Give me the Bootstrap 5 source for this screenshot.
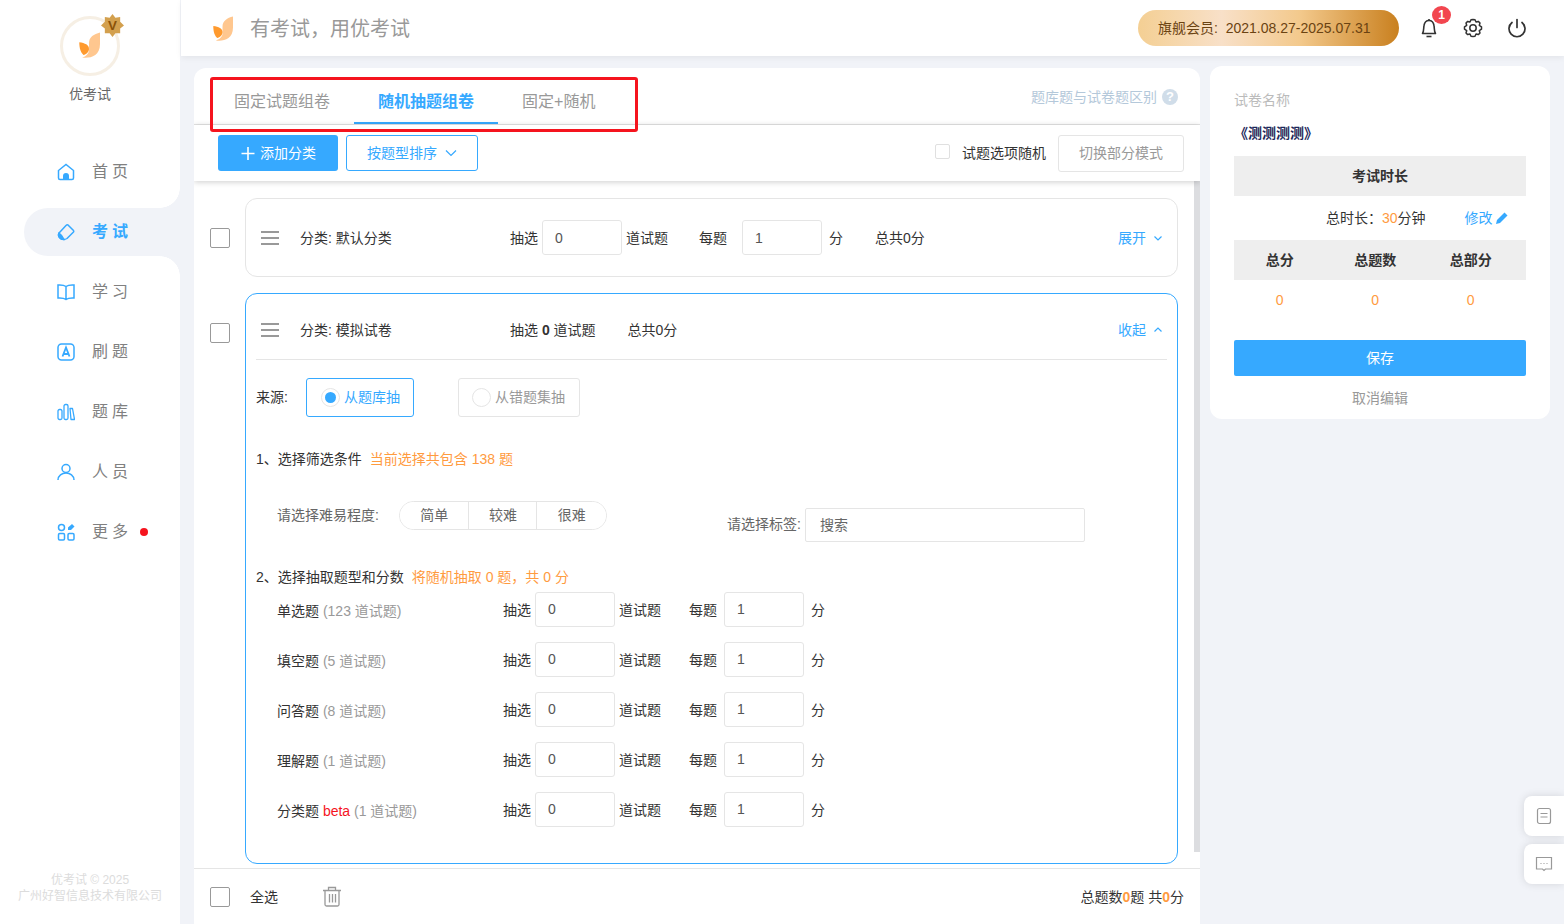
<!DOCTYPE html>
<html lang="zh-CN">
<head>
<meta charset="utf-8">
<title>优考试</title>
<link href="https://cdn.jsdelivr.net/npm/bootstrap@5.3.0/dist/css/bootstrap.min.css" rel="stylesheet">
<style>
html,body{height:100%;overflow:hidden}
body{font-family:"Liberation Sans","Noto Sans CJK SC",sans-serif;font-size:14px;color:#333;background:#f1f3f8;line-height:20px}
.app-shell{height:924px;width:1564px}
.side-bar{width:180px;flex:none;background:#fff;height:924px}
.brand-box{height:142px;padding-top:16px}
.logo-ring{width:60px;height:60px;border-radius:50%;border:3px solid #f6efe4;position:relative;background:#fff}
.logo-ring svg.leaf{width:21px;height:26px;margin:13px 0 0 16px;display:block}
.logo-star{position:absolute;right:-7px;top:-5px;width:23px;height:23px}
.brand-name{color:#666;font-size:14px;margin-top:8px}
.menu-row{height:60px;padding:6px 0 6px 57px;color:#808080;font-size:16px;letter-spacing:4px;position:relative}
.menu-row svg{width:18px;height:18px;margin-right:17px;flex:none}
.menu-row.is-on{height:48px;margin:6px 0 6px 24px;padding:0 0 0 33px;background:#f1f3f8;border-radius:24px 0 0 24px;color:#36a9ff;font-weight:700}
.menu-row.is-on::before,.menu-row.is-on::after{content:"";position:absolute;right:0;width:20px;height:20px}
.menu-row.is-on::before{top:-20px;background:radial-gradient(circle at 0 0,#fff 19.5px,#f1f3f8 20px)}
.menu-row.is-on::after{bottom:-20px;background:radial-gradient(circle at 0 100%,#fff 19.5px,#f1f3f8 20px)}
.red-dot{width:8px;height:8px;border-radius:50%;background:#f5141e;display:inline-block;margin-left:8px}
.copy-note{color:#dcdcdc;font-size:12px;line-height:16px;padding-bottom:20px;margin-top:auto}
.top-bar{height:56px;background:#fff;margin-left:1px;box-shadow:0 2px 6px rgba(0,0,0,.06);padding-left:32px;padding-right:35px;position:relative;z-index:2}
.slogan{font-size:20px;color:#999;margin-left:17px;padding-top:2px}
.vip-pill{width:261px;height:36px;border-radius:18px;background:linear-gradient(90deg,#f4cf93 0%,#f8e0c8 32%,#f3c98c 62%,#c9801f 100%);color:#6b4312;font-size:14px;padding-left:20px;margin-right:-2px}
.top-icon{width:24px;height:24px;margin-left:20px;position:relative;flex:none}
.top-icon svg{width:24px;height:24px;display:block}
.num-dot{position:absolute;left:15px;top:-10px;width:19px;height:18px;border-radius:50%;background:#f2464f;color:#fff;font-size:12px;font-weight:700;line-height:18px;text-align:center}
.work-area{padding:10px 14px 0 14px;gap:10px;height:868px;margin-top:0}
.main-panel{width:1006px;height:856px;background:#fff;border-radius:12px 12px 0 0;margin-top:2px;position:relative;overflow:hidden;border:0}
.tab-line{height:57px;border-bottom:1px solid #e5e5e5;padding-left:16px;padding-right:22px;flex:none}
.tab-item{height:56px;font-size:16px;color:#999;padding:14px 24px 0;display:flex;align-items:center;border-bottom:2px solid transparent;text-decoration:none}
.tab-item:hover{color:#999}
.tab-item.is-on{color:#36a9ff;font-weight:700;border-bottom-color:#36a9ff}
.red-frame{position:absolute;left:16px;top:9px;width:428px;height:55px;border:3px solid #f5141e;border-radius:3px;pointer-events:none;z-index:3}
.hint-link{color:#b4c8da;font-size:14px;margin-top:19px}
.hint-q{width:16px;height:16px;border-radius:50%;background:#d0dde9;color:#fff;font-size:13px;font-weight:700;line-height:16px;text-align:center;margin-left:5px}
.tool-line{height:56px;padding:10px 16px 0 24px;box-shadow:0 1px 6px rgba(0,0,0,.2);position:relative;z-index:1;background:#fff;align-items:flex-start;flex:none}
.btn-fill{width:120px;height:36px;background:#36a9ff;border:0;border-radius:3px;color:#fff;font-size:14px;padding:0;display:flex;align-items:center;justify-content:center}
.btn-line{width:132px;height:36px;background:#fff;border:1px solid #36a9ff;border-radius:3px;color:#36a9ff;font-size:14px;padding:0;margin-left:8px;display:flex;align-items:center;justify-content:center}
.btn-plain{width:126px;height:37px;background:#fff;border:1px solid #e5e5e5;border-radius:3px;color:#999;font-size:14px;padding:0;margin-left:12px}
.form-check-input.tick{width:20px;height:20px;margin:0;border:1px solid #999;border-radius:2px;flex:none;background-color:#fff}
.form-check-input.tick-sm{width:15px;height:15px;margin:9px 0 0;border:1px solid #e0e0e0;border-radius:2px}
.scroll-zone{height:687px;padding:17px 0 0 16px;position:relative;overflow:hidden;flex:none}
.scroll-thumb{position:absolute;right:0;top:0;width:6px;height:671px;background:#dcdde0}
.case-row{gap:15px;align-items:flex-start;margin-bottom:16px}
.case-box{width:933px;border-radius:12px;border:1px solid #e5e5e5;margin:0;flex:none}
.case-box.is-open{border-color:#36a9ff;height:571px;padding:0 10px}
.form-check-input.tick.tick-drop{margin-top:30px}
.case-head{height:77px;padding:0 14px 0 15px;flex:none}
.is-open .case-head{height:66px;padding:6px 4px 0 5px;border-bottom:1px solid #e5e5e5}
.burger{width:18px;height:14px;margin-right:21px;flex:none;display:block}
.w-name{width:210px;flex:none}
.w-pick{width:32px;flex:none}
.w-way{width:73px;flex:none;margin-left:4px}
.w-each{width:43px;flex:none}
.w-unit{width:46px;flex:none;margin-left:7px}
.num-box.form-control{width:80px;height:35px;flex:none;border:1px solid #e5e5e5;border-radius:3px;font-size:14px;color:#555;padding:0 12px;background:#fff;box-shadow:none}
.link-blue{color:#36a9ff;margin-left:auto}
.link-blue svg{width:10px;height:10px;margin-left:7px}
.src-line{margin-top:18px;height:39px;flex:none}
.src-label{width:50px;padding-bottom:2px}
.src-opt{height:39px;border:1px solid #36a9ff;border-radius:3px;width:108px;color:#36a9ff;padding:0 0 1px 14px}
.src-opt.is-off{border-color:#e5e5e5;color:#999;width:122px;margin-left:44px;padding-left:13px}
.dot-radio{width:19px;height:19px;border-radius:50%;border:1px solid #e5e5e5;margin-right:4px;flex:none;position:relative;background:#fff}
.is-sel::after{content:"";position:absolute;left:3px;top:3px;width:11px;height:11px;border-radius:50%;background:#36a9ff}
.step-line{height:20px;font-size:14px;flex:none}
.step-line b{font-weight:400;color:#ff9b3f;margin-left:8px;font-size:14px}
.step-a{margin-top:32px}
.filter-line{margin-top:32px;height:41px;padding-left:21px;align-items:flex-start;flex:none}
.lvl-label{width:122px;height:29px;line-height:29px;color:#666;font-size:14px;flex:none}
.lvl-group{width:208px;height:29px;border:1px solid #e5e5e5;border-radius:15px;overflow:hidden;flex:none}
.lvl-group .btn{flex:1;border:0;border-left:1px solid #e5e5e5;border-radius:0;padding:0;font-size:14px;color:#666;background:#fff;height:27px}
.lvl-group .btn:first-child{border-left:0}
.tag-label{margin-left:120px;margin-top:13px;width:78px;color:#666;font-size:14px;line-height:20px;flex:none}
.tag-box.form-control{width:280px;height:34px;margin-top:7px;border:1px solid #e5e5e5;border-radius:2px;font-size:14px;color:#666;padding:0 14px;box-shadow:none;flex:none}
.tag-box.form-control::placeholder{color:#666}
.step-b{margin-top:25px;margin-bottom:-3px}
.q-line{height:50px;padding-left:21px;flex:none}
.q-line span{padding-top:2px}
.q-line .q-name{width:226px;flex:none;padding-top:4px}
.q-name i{font-style:normal;color:#999}
.q-name u{text-decoration:none;color:#f5141e}
.q-way{width:70px;flex:none;margin-left:4px}
.q-each{width:35px;flex:none}
.q-unit{margin-left:7px}
.foot-line{height:56px;border-top:1px solid #e5e5e5;padding:0 16px;background:#fff;flex:none}
.foot-num{color:#ff9b3f;font-weight:700}
.trash{width:20px;height:21px;margin-left:44px}
.side-card{width:340px;height:353px;background:#fff;border-radius:12px;border:0;padding:24px 24px 0;flex:none}
.paper-tag{color:#bbb;font-size:14px;flex:none}
.paper-name{color:#1c2759;font-weight:700;font-size:14px;margin-top:13px;flex:none}
.grey-band{height:40px;background:#eee;font-weight:700;font-size:14px;flex:none}
.band-top{margin-top:13px}
.time-line{height:44px;padding-left:92px;flex:none}
.time-line em{font-style:normal;color:#ff9b3f}
.edit-link{color:#36a9ff;margin-left:39px}
.edit-link svg{width:14px;height:14px;margin-left:2px}
.stat-col{width:95.5px;flex:none;text-align:center}
.stat-col:first-child{margin-left:-2px}
.val-line{height:40px;color:#ff9b3f;font-size:14px;flex:none}
.save-btn.btn{height:36px;width:100%;background:#36a9ff;border:0;border-radius:2px;color:#fff;font-size:14px;margin-top:20px;padding:0;flex:none}
.undo-link{color:#999;text-align:center;margin-top:12px;flex:none}
.side-float{position:absolute;right:0;width:40px;height:40px;background:#fff;border-radius:8px 0 0 8px;box-shadow:0 0 8px rgba(0,0,0,.12);z-index:5}
.side-float svg{width:18px;height:18px}
</style>
</head>
<body>
<div class="app-shell d-flex position-relative">
  <aside class="side-bar d-flex flex-column">
    <div class="brand-box d-flex flex-column align-items-center">
      <div class="logo-ring">
        <svg class="leaf" viewBox="0 0 21 26"><path d="M21 .5C15 2 10 5 10 11V18C10 22 6 25 3 25.500C10 26.500 21 25 21 12Z" fill="#ffc78f"/><path d="M.3 10.300C6 11 10 13 10 17C10 20 7 22.500 4.500 23C2 21 .3 17 .3 10.300Z" fill="#ff9a2e"/></svg>
        <svg class="logo-star" viewBox="0 0 24 24"><polygon points="12,0 15,4 20,3 20,8 24,12 20,15 20,20 15,20 12,24 9,20 4,20 4,15 0,12 4,8 4,3 9,4" fill="#d3a04e"/><text x="12" y="17" text-anchor="middle" font-size="14" font-weight="700" fill="#8a5208" font-family="Liberation Sans">V</text></svg>
      </div>
      <div class="brand-name">优考试</div>
    </div>
    <div class="menu-row d-flex align-items-center"><svg viewBox="0 0 18 18" fill="none" stroke="#36a9ff" stroke-width="1.500"><path d="M1.500 7.500L9 1.500L16.500 7.500V15A1.500 1.500 0 0 1 15 16.500H3A1.500 1.500 0 0 1 1.500 15Z"/><path d="M6 16.500V13A3 3 0 0 1 12 13V16.500Z" fill="#36a9ff" stroke="none"/></svg>首页</div>
    <div class="menu-row is-on d-flex align-items-center"><svg viewBox="0 0 18 18" fill="none" stroke="#36a9ff" stroke-width="1.500"><path d="M11 2L16.500 7.500Q17 8.500 16.500 9L10 15.500Q8.500 16.500 6.500 16.500Q4 16.500 2.500 14.500Q.5 12 2.500 9.500L9 2.500Q10 1.500 11 2Z" stroke-linejoin="round"/><path d="M2 10Q5 12 7 16.500Q4 16.500 2.500 14.500Q.8 12.500 2 10Z" fill="#36a9ff"/></svg>考试</div>
    <div class="menu-row d-flex align-items-center"><svg viewBox="0 0 18 18" fill="none" stroke="#36a9ff" stroke-width="1.500"><path d="M9 3.500C7 2 4 1.800 1 2V15C4 14.800 7 15 9 16.500C11 15 14 14.800 17 15V2C14 1.800 11 2 9 3.500ZM9 3.500V16.500"/></svg>学习</div>
    <div class="menu-row d-flex align-items-center"><svg viewBox="0 0 18 18" fill="none" stroke="#36a9ff" stroke-width="1.500"><rect x="1" y="1" width="16" height="16" rx="3.500"/><path d="M5.500 13.500L9 4.500L12.500 13.500M6.500 11H11.500" stroke-width="1.800"/></svg>刷题</div>
    <div class="menu-row d-flex align-items-center"><svg viewBox="0 0 18 18" fill="none" stroke="#36a9ff" stroke-width="1.300"><rect x="1" y="6.500" width="4" height="10" rx="1.500"/><rect x="7" y="1.500" width="4" height="15" rx="1.500"/><path d="M13 5.500H15.500L17.500 16.500H14Z" stroke-linejoin="round"/></svg>题库</div>
    <div class="menu-row d-flex align-items-center"><svg viewBox="0 0 18 18" fill="none" stroke="#36a9ff" stroke-width="1.500"><circle cx="9" cy="5.500" r="4"/><path d="M1 17C1 12.500 5 10 9 10S17 12.500 17 17"/></svg>人员</div>
    <div class="menu-row d-flex align-items-center"><svg viewBox="0 0 18 18" fill="none" stroke="#36a9ff" stroke-width="1.500"><circle cx="4.500" cy="4.500" r="3"/><rect x="1.500" y="10.500" width="6" height="6.500" rx="1.200"/><rect x="11" y="10.500" width="6" height="6.500" rx="1.200"/><path d="M11 7L11 4.500L15 1L17.500 3.500L14 7Z" fill="#36a9ff" stroke="none"/></svg>更多<span class="red-dot"></span></div>
    <div class="copy-note text-center">优考试 © 2025<br>广州好智信息技术有限公司</div>
  </aside>
  <div class="flex-grow-1 d-flex flex-column">
    <header class="top-bar d-flex align-items-center">
      <svg width="20" height="25" viewBox="0 0 21 26"><path d="M21 .5C15 2 10 5 10 11V18C10 22 6 25 3 25.500C10 26.500 21 25 21 12Z" fill="#ffc78f"/><path d="M.3 10.300C6 11 10 13 10 17C10 20 7 22.500 4.500 23C2 21 .3 17 .3 10.300Z" fill="#ff9a2e"/></svg>
      <div class="slogan">有考试，用优考试</div>
      <div class="vip-pill d-flex align-items-center ms-auto">旗舰会员:&nbsp;&nbsp;2021.08.27-2025.07.31</div>
      <div class="top-icon"><svg viewBox="0 0 24 24" fill="none" stroke="#333" stroke-width="1.600"><path d="M5.500 17.500C7 15.500 6.500 12 7 9.500C7.500 6.500 9.500 4.500 12 4.500S16.500 6.500 17 9.500C17.500 12 17 15.500 18.500 17.500Z" stroke-linejoin="round"/><path d="M9.500 20.500H14.500"/><path d="M12 3V4.500"/></svg><span class="num-dot">1</span></div>
      <div class="top-icon"><svg viewBox="0 0 24 24" fill="none" stroke="#333" stroke-width="1.500"><path d="M12 3.500L14 3.800L15 6L17.300 5.400L19 7L18.300 9.300L20.500 10.800V13.200L18.300 14.700L19 17L17.300 18.600L15 18L14 20.200L12 20.500L10 20.200L9 18L6.700 18.600L5 17L5.700 14.700L3.500 13.200V10.800L5.700 9.300L5 7L6.700 5.400L9 6L10 3.800Z" stroke-linejoin="round"/><circle cx="12" cy="12" r="3.200"/></svg></div>
      <div class="top-icon"><svg viewBox="0 0 24 24" fill="none" stroke="#333" stroke-width="1.700" stroke-linecap="round"><path d="M12 3.500V11.500"/><path d="M7 6.500A8 8 0 1 0 17 6.500"/></svg></div>
    </header>
    <div class="work-area d-flex align-items-start">
      <section class="main-panel card">
        <div class="red-frame"></div>
        <div class="tab-line d-flex align-items-start">
          <nav class="nav">
            <a class="tab-item" href="#">固定试题组卷</a>
            <a class="tab-item is-on" href="#">随机抽题组卷</a>
            <a class="tab-item" href="#">固定+随机</a>
          </nav>
          <div class="hint-link d-flex align-items-center ms-auto">题库题与试卷题区别<span class="hint-q">?</span></div>
        </div>
        <div class="tool-line d-flex">
          <button class="btn btn-fill" type="button"><svg width="16" height="16" viewBox="0 0 16 16" class="me-1" stroke="#fff" stroke-width="1.600"><path d="M8 2V15M1.500 8.500H14.500"/></svg>添加分类</button>
          <button class="btn btn-line" type="button">按题型排序<svg width="12" height="12" viewBox="0 0 12 12" class="ms-2" fill="none" stroke="#36a9ff" stroke-width="1.200"><path d="M1 3.500L6 8.500L11 3.500"/></svg></button>
          <div class="d-flex align-items-start ms-auto">
            <input class="form-check-input tick-sm" type="checkbox">
            <span class="ms-2 ps-1 mt-2">试题选项随机</span>
            <button class="btn btn-plain" type="button">切换部分模式</button>
          </div>
        </div>
        <div class="scroll-zone">
          <div class="scroll-thumb"></div>
          <div class="case-row d-flex">
            <input class="form-check-input tick tick-drop" type="checkbox">
            <div class="case-box card">
              <div class="case-head d-flex align-items-center">
                <svg class="burger" viewBox="0 0 18 14" stroke="#999" stroke-width="2"><path d="M0 1H18M0 7H18M0 13H18"/></svg>
                <span class="w-name">分类: 默认分类</span>
                <span class="w-pick">抽选</span><input class="form-control num-box" value="0"><span class="w-way">道试题</span>
                <span class="w-each">每题</span><input class="form-control num-box" value="1"><span class="w-unit">分</span>
                <span>总共0分</span>
                <span class="link-blue d-flex align-items-center">展开<svg viewBox="0 0 10 10" fill="none" stroke="#36a9ff" stroke-width="1.200"><path d="M1.500 3.500L5 7L8.500 3.500"/></svg></span>
              </div>
            </div>
          </div>
          <div class="case-row d-flex">
            <input class="form-check-input tick tick-drop" type="checkbox">
            <div class="case-box card is-open">
              <div class="case-head d-flex align-items-center">
                <svg class="burger" viewBox="0 0 18 14" stroke="#999" stroke-width="2"><path d="M0 1H18M0 7H18M0 13H18"/></svg>
                <span class="w-name">分类: 模拟试卷</span>
                <span>抽选 <strong>0</strong> 道试题</span>
                <span class="ms-4 ps-2">总共0分</span>
                <span class="link-blue d-flex align-items-center">收起<svg viewBox="0 0 10 10" fill="none" stroke="#36a9ff" stroke-width="1.200"><path d="M1.500 6.500L5 3L8.500 6.500"/></svg></span>
              </div>
              <div class="src-line d-flex align-items-center">
                <span class="src-label">来源:</span>
                <div class="src-opt d-flex align-items-center"><span class="dot-radio is-sel"></span>从题库抽</div>
                <div class="src-opt is-off d-flex align-items-center"><span class="dot-radio"></span>从错题集抽</div>
              </div>
              <div class="step-line step-a d-flex align-items-center">1、选择筛选条件<b>当前选择共包含 138 题</b></div>
              <div class="filter-line d-flex">
                <span class="lvl-label">请选择难易程度:</span>
                <div class="lvl-group btn-group" role="group">
                  <button class="btn" type="button">简单</button>
                  <button class="btn" type="button">较难</button>
                  <button class="btn" type="button">很难</button>
                </div>
                <span class="tag-label">请选择标签:</span>
                <input class="form-control tag-box" placeholder="搜索">
              </div>
              <div class="step-line step-b d-flex align-items-center">2、选择抽取题型和分数<b>将随机抽取 0 题，共 0 分</b></div>
              <div class="q-line d-flex align-items-center"><span class="q-name">单选题 <i>(123 道试题)</i></span><span class="w-pick">抽选</span><input class="form-control num-box" value="0"><span class="q-way">道试题</span><span class="q-each">每题</span><input class="form-control num-box" value="1"><span class="q-unit">分</span></div>
              <div class="q-line d-flex align-items-center"><span class="q-name">填空题 <i>(5 道试题)</i></span><span class="w-pick">抽选</span><input class="form-control num-box" value="0"><span class="q-way">道试题</span><span class="q-each">每题</span><input class="form-control num-box" value="1"><span class="q-unit">分</span></div>
              <div class="q-line d-flex align-items-center"><span class="q-name">问答题 <i>(8 道试题)</i></span><span class="w-pick">抽选</span><input class="form-control num-box" value="0"><span class="q-way">道试题</span><span class="q-each">每题</span><input class="form-control num-box" value="1"><span class="q-unit">分</span></div>
              <div class="q-line d-flex align-items-center"><span class="q-name">理解题 <i>(1 道试题)</i></span><span class="w-pick">抽选</span><input class="form-control num-box" value="0"><span class="q-way">道试题</span><span class="q-each">每题</span><input class="form-control num-box" value="1"><span class="q-unit">分</span></div>
              <div class="q-line d-flex align-items-center"><span class="q-name">分类题 <u>beta</u> <i>(1 道试题)</i></span><span class="w-pick">抽选</span><input class="form-control num-box" value="0"><span class="q-way">道试题</span><span class="q-each">每题</span><input class="form-control num-box" value="1"><span class="q-unit">分</span></div>
            </div>
          </div>
        </div>
        <div class="foot-line d-flex align-items-center">
          <input class="form-check-input tick" type="checkbox">
          <span class="ms-3 ps-1">全选</span>
          <svg class="trash" viewBox="0 0 20 21" fill="none" stroke="#999" stroke-width="1.300"><path d="M1 4.500H19M6.500 4.500V1.500H13.500V4.500M3 4.500V18.500A1.500 1.500 0 0 0 4.500 20H15.500A1.500 1.500 0 0 0 17 18.500V4.500M7.500 8V16.500M10.500 8V16.500M13.500 8V16.500"/></svg>
          <span class="ms-auto">总题数<span class="foot-num">0</span>题 共<span class="foot-num">0</span>分</span>
        </div>
      </section>
      <aside class="side-card card">
        <div class="paper-tag">试卷名称</div>
        <div class="paper-name">《测测测测》</div>
        <div class="grey-band band-top d-flex align-items-center justify-content-center">考试时长</div>
        <div class="time-line d-flex align-items-center">总时长：<em>30</em>分钟<span class="edit-link d-flex align-items-center">修改<svg viewBox="0 0 14 14"><path d="M1 13L2 9L9.500 1.500L12.500 4.500L5 12Z" fill="#36a9ff"/></svg></span></div>
        <div class="grey-band d-flex align-items-center"><span class="stat-col">总分</span><span class="stat-col">总题数</span><span class="stat-col">总部分</span></div>
        <div class="val-line d-flex align-items-center"><span class="stat-col">0</span><span class="stat-col">0</span><span class="stat-col">0</span></div>
        <button class="btn save-btn" type="button">保存</button>
        <div class="undo-link">取消编辑</div>
      </aside>
    </div>
  </div>
  <div class="side-float d-flex align-items-center justify-content-center" style="top:796px"><svg viewBox="0 0 18 18" fill="none" stroke="#999" stroke-width="1.200"><rect x="2.500" y="1.500" width="13" height="15" rx="2"/><path d="M5.500 6.500H12.500M5.500 10H12.500"/></svg></div>
  <div class="side-float d-flex align-items-center justify-content-center" style="top:844px"><svg viewBox="0 0 18 18" fill="none" stroke="#999" stroke-width="1.200"><path d="M1.500 2.500H16.500V14H10.500L9 15.500L7.500 14H1.500Z"/><path d="M5.500 8.500H6.500M8.500 8.500H9.500M11.500 8.500H12.500"/></svg></div>
</div>
<script src="https://cdn.jsdelivr.net/npm/bootstrap@5.3.0/dist/js/bootstrap.bundle.min.js"></script>
</body>
</html>
